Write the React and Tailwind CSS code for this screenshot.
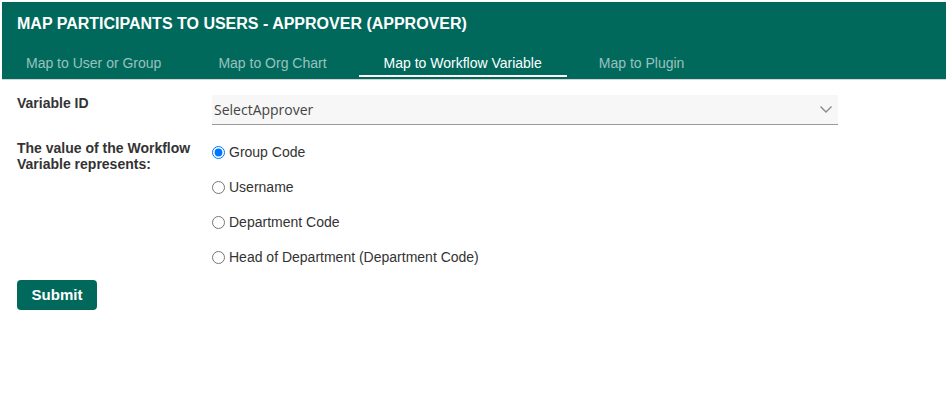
import { useState } from "react";

const tabs = [
  "Map to User or Group",
  "Map to Org Chart",
  "Map to Workflow Variable",
  "Map to Plugin",
];

const options = [
  "Group Code",
  "Username",
  "Department Code",
  "Head of Department (Department Code)",
];

export default function App() {
  const [active, setActive] = useState(2);
  const [picked, setPicked] = useState(0);

  return (
    <div className="min-h-screen bg-white pt-[2px] pl-[2px] pr-[2px] font-['Liberation_Sans',Arial,sans-serif] text-[#333]">
      <div className="bg-[#00695c] border-b border-[#d4d4d4]">
        <h1 className="px-[15px] pt-[12px] text-[16px] leading-[20px] font-bold text-white">
          MAP PARTICIPANTS TO USERS - APPROVER (APPROVER)
        </h1>
        <div className="flex gap-[7px] pb-[2px] -ml-[1px]">
          {tabs.map((t, i) => (
            <button
              key={t}
              onClick={() => setActive(i)}
              className={
                "px-[25px] pt-[21px] pb-[4px] text-[14px] leading-[16px] border-b-2 " +
                (i === active
                  ? "text-white border-white"
                  : "text-white/60 border-transparent")
              }
            >
              {t}
            </button>
          ))}
        </div>
      </div>

      <div className="px-[15px] pt-[15px]">
        <div className="flex">
          <label className="w-[195px] shrink-0 text-[14px] leading-[16px] font-bold">
            Variable ID
          </label>
          <div className="flex h-[30px] w-[626px] items-center justify-between border-b border-[#9a9a9a] bg-[#f7f7f7] pl-[2px] pr-[6px]">
            <span className="font-['Open_Sans',sans-serif] text-[14px] text-[#444]">
              SelectApprover
            </span>
            <svg width="12" height="7" viewBox="0 0 12 7" fill="none">
              <polyline points="0.5,0.5 6,6 11.5,0.5" stroke="#8a8a8a" strokeWidth="1.4" />
            </svg>
          </div>
        </div>

        <div className="mt-[15px] flex">
          <label className="w-[195px] shrink-0 text-[14px] leading-[16px] font-bold">
            The value of the Workflow Variable represents:
          </label>
          <div className="flex flex-col gap-[11px]">
            {options.map((o, i) => (
              <label key={o} className="flex h-[24px] items-center gap-[4px] text-[14px]">
                <input
                  type="radio"
                  name="represents"
                  checked={picked === i}
                  onChange={() => setPicked(i)}
                  className="m-0 h-[13px] w-[13px]"
                />
                {o}
              </label>
            ))}
          </div>
        </div>

        <button className="mt-[11px] h-[30px] w-[80px] rounded-[4px] bg-[#00695c] text-[15px] font-bold text-white">
          Submit
        </button>
      </div>
    </div>
  );
}
